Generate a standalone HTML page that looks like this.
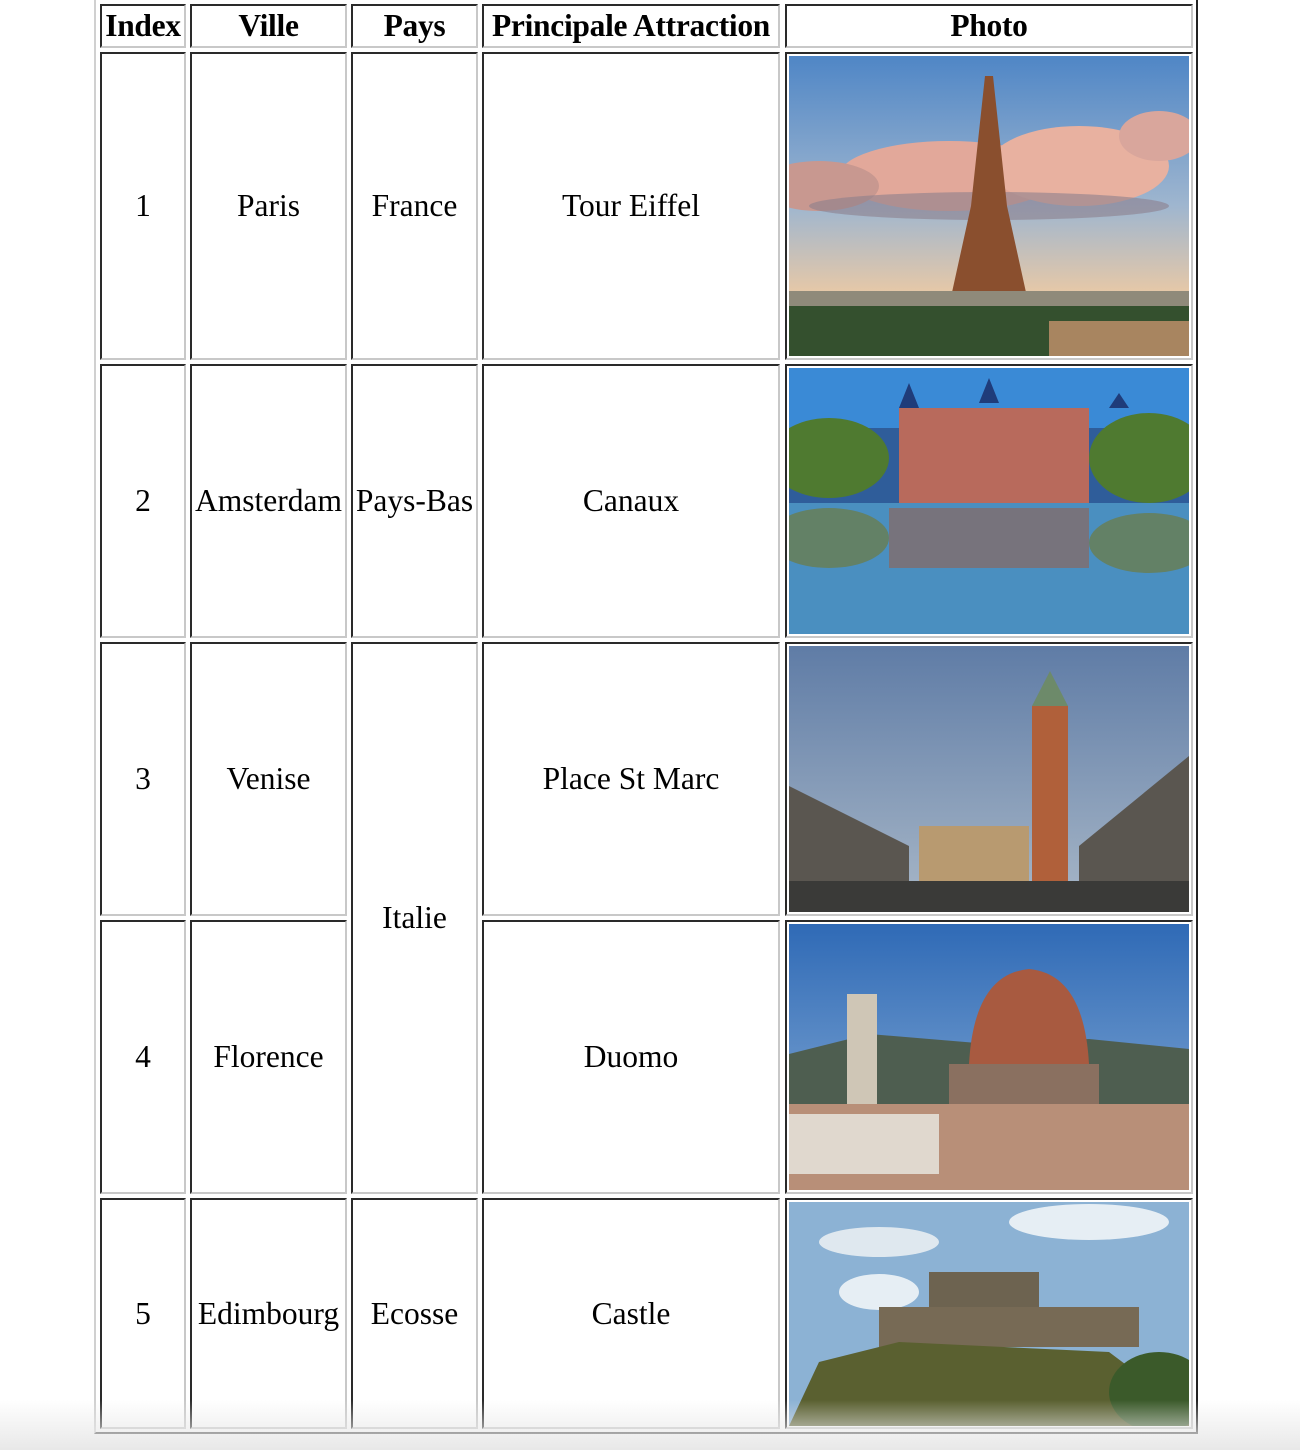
<!DOCTYPE html><html><head><style>
body{margin:0;width:1300px;height:1450px;background:#fff;position:relative;overflow:hidden;font-family:"Liberation Serif",serif;font-size:31.5px;color:#000}
.c{position:absolute;box-sizing:border-box;border-top:2px solid #2a2a2a;border-left:2px solid #2a2a2a;border-right:2px solid #c8c8c8;border-bottom:2px solid #c8c8c8;display:flex;align-items:center;justify-content:center;text-align:center;white-space:nowrap}
.h{font-weight:bold;letter-spacing:-0.3px}
.img{position:absolute;overflow:hidden}
</style></head><body>
<div style="position:absolute;left:94px;top:-4px;width:1104px;height:1438px;box-sizing:border-box;border-left:2px solid #d0d0d0;border-bottom:2px solid #222;border-right:2px solid #222"></div>

<div class="c h" style="left:100px;top:4px;width:86px;height:44px">Index</div>
<div class="c h" style="left:190px;top:4px;width:157px;height:44px">Ville</div>
<div class="c h" style="left:351px;top:4px;width:127px;height:44px">Pays</div>
<div class="c h" style="left:482px;top:4px;width:298px;height:44px">Principale Attraction</div>
<div class="c h" style="left:785px;top:4px;width:408px;height:44px">Photo</div>

<div class="c" style="left:100px;top:52px;width:86px;height:308px">1</div>
<div class="c" style="left:190px;top:52px;width:157px;height:308px">Paris</div>
<div class="c" style="left:351px;top:52px;width:127px;height:308px">France</div>
<div class="c" style="left:482px;top:52px;width:298px;height:308px">Tour Eiffel</div>
<div class="c" style="left:785px;top:52px;width:408px;height:308px"></div>

<div class="c" style="left:100px;top:364px;width:86px;height:274px">2</div>
<div class="c" style="left:190px;top:364px;width:157px;height:274px">Amsterdam</div>
<div class="c" style="left:351px;top:364px;width:127px;height:274px">Pays-Bas</div>
<div class="c" style="left:482px;top:364px;width:298px;height:274px">Canaux</div>
<div class="c" style="left:785px;top:364px;width:408px;height:274px"></div>

<div class="c" style="left:100px;top:642px;width:86px;height:274px">3</div>
<div class="c" style="left:190px;top:642px;width:157px;height:274px">Venise</div>
<div class="c" style="left:351px;top:642px;width:127px;height:552px">Italie</div>
<div class="c" style="left:482px;top:642px;width:298px;height:274px">Place St Marc</div>
<div class="c" style="left:785px;top:642px;width:408px;height:274px"></div>

<div class="c" style="left:100px;top:920px;width:86px;height:274px">4</div>
<div class="c" style="left:190px;top:920px;width:157px;height:274px">Florence</div>
<div class="c" style="left:482px;top:920px;width:298px;height:274px">Duomo</div>
<div class="c" style="left:785px;top:920px;width:408px;height:274px"></div>

<div class="c" style="left:100px;top:1198px;width:86px;height:231px">5</div>
<div class="c" style="left:190px;top:1198px;width:157px;height:231px">Edimbourg</div>
<div class="c" style="left:351px;top:1198px;width:127px;height:231px">Ecosse</div>
<div class="c" style="left:482px;top:1198px;width:298px;height:231px">Castle</div>
<div class="c" style="left:785px;top:1198px;width:408px;height:231px"></div>

<svg class="img" style="left:789px;top:56px" width="400" height="300">
<defs><linearGradient id="s1" x1="0" y1="0" x2="0" y2="1"><stop offset="0" stop-color="#4f86c6"/><stop offset=".5" stop-color="#9fb6cf"/><stop offset=".8" stop-color="#e9c9a6"/></linearGradient></defs>
<rect width="400" height="300" fill="url(#s1)"/>
<ellipse cx="160" cy="120" rx="110" ry="35" fill="#e2a89a"/><ellipse cx="290" cy="110" rx="90" ry="40" fill="#e8b1a0"/><ellipse cx="30" cy="130" rx="60" ry="25" fill="#c89890"/><ellipse cx="370" cy="80" rx="40" ry="25" fill="#d9a69c"/>
<ellipse cx="200" cy="150" rx="180" ry="14" fill="#8c7f8c" opacity=".6"/>
<polygon points="196,20 204,20 218,150 240,250 160,250 182,150" fill="#8a4f2e"/>
<rect x="0" y="235" width="400" height="20" fill="#8f8a7a"/><rect x="0" y="250" width="400" height="50" fill="#34502e"/><rect x="260" y="265" width="140" height="35" fill="#a88560"/>
</svg>

<svg class="img" style="left:789px;top:368px" width="400" height="266">
<rect width="400" height="266" fill="#3a8ad6"/>
<rect x="0" y="60" width="400" height="80" fill="#2f5d9a"/>
<rect x="110" y="40" width="190" height="100" fill="#b86a5c"/><polygon points="110,40 120,15 130,40" fill="#1f3c7a"/><polygon points="190,35 200,10 210,35" fill="#1f3c7a"/><polygon points="320,40 330,25 340,40" fill="#1f3c7a"/>
<ellipse cx="40" cy="90" rx="60" ry="40" fill="#4f7a30"/><ellipse cx="360" cy="90" rx="60" ry="45" fill="#4f7a30"/>
<rect x="0" y="135" width="400" height="131" fill="#4a8fc0"/><rect x="100" y="140" width="200" height="60" fill="#8a6660" opacity=".7"/><ellipse cx="40" cy="170" rx="60" ry="30" fill="#6d7a40" opacity=".7"/><ellipse cx="360" cy="175" rx="60" ry="30" fill="#6d7a40" opacity=".7"/>
</svg>

<svg class="img" style="left:789px;top:646px" width="400" height="266">
<defs><linearGradient id="s3" x1="0" y1="0" x2="0" y2="1"><stop offset="0" stop-color="#5f7ca6"/><stop offset="1" stop-color="#a9b8c8"/></linearGradient></defs>
<rect width="400" height="266" fill="url(#s3)"/>
<polygon points="0,140 120,200 120,266 0,266" fill="#5a5650"/><polygon points="400,110 290,200 290,266 400,266" fill="#5a5650"/>
<rect x="130" y="180" width="110" height="60" fill="#b89a70"/>
<rect x="243" y="60" width="36" height="180" fill="#b0603a"/><polygon points="243,60 261,25 279,60" fill="#6d8a6a"/>
<rect x="0" y="235" width="400" height="31" fill="#3a3a38"/>
</svg>

<svg class="img" style="left:789px;top:924px" width="400" height="266">
<defs><linearGradient id="s4" x1="0" y1="0" x2="0" y2="1"><stop offset="0" stop-color="#2f6ab6"/><stop offset="1" stop-color="#8fb2d8"/></linearGradient></defs>
<rect width="400" height="266" fill="url(#s4)"/>
<polygon points="0,130 80,110 200,120 300,115 400,125 400,266 0,266" fill="#4e5e50"/>
<rect x="58" y="70" width="30" height="130" fill="#cfc6b6"/>
<path d="M180 140 Q185 50 240 45 Q295 50 300 140Z" fill="#a85a40"/>
<rect x="160" y="140" width="150" height="60" fill="#8a7060"/>
<rect x="0" y="180" width="400" height="86" fill="#b88f78"/><rect x="0" y="190" width="150" height="60" fill="#e0d8ce"/>
</svg>

<svg class="img" style="left:789px;top:1202px" width="400" height="224">
<rect width="400" height="224" fill="#8cb2d4"/>
<ellipse cx="90" cy="40" rx="60" ry="15" fill="#dfe8ef"/><ellipse cx="300" cy="20" rx="80" ry="18" fill="#e6eef4"/><ellipse cx="90" cy="90" rx="40" ry="18" fill="#e6eef4"/>
<rect x="140" y="70" width="110" height="60" fill="#6d6350"/><rect x="90" y="105" width="260" height="40" fill="#776a55"/>
<polygon points="0,224 30,160 110,140 320,150 360,180 400,200 400,224" fill="#5a6030"/>
<ellipse cx="370" cy="190" rx="50" ry="40" fill="#3b5a2a"/>
</svg>

<div style="position:absolute;left:0;top:1400px;width:1300px;height:50px;background:linear-gradient(rgba(232,232,232,0),#e8e8e8);pointer-events:none"></div>
</body></html>
